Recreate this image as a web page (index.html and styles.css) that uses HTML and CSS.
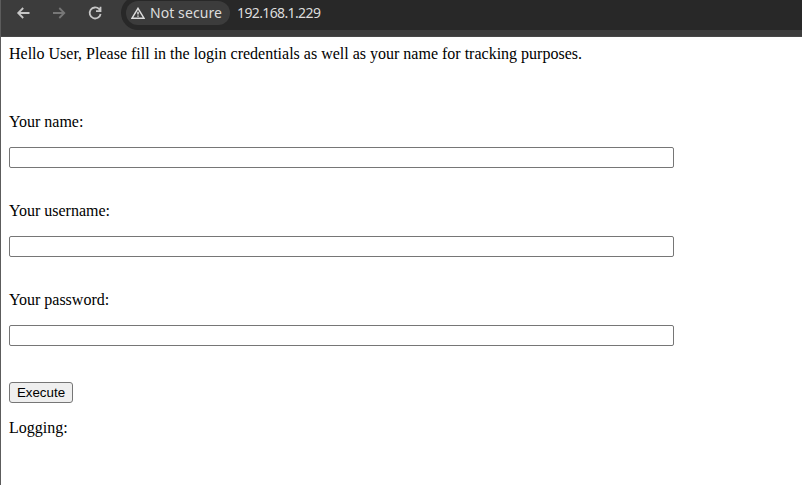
FILE: index.html
```
<!DOCTYPE html>
<html lang="en">
<head>
<meta charset="utf-8">
<title>Login</title>
<link rel="stylesheet" href="styles.css">
</head>
<body>
<div class="window">
  <header class="toolbar">
    <nav class="nav">
      <svg class="icon" viewBox="0 0 16 16"><path d="M14.5 8H3.5M8.2 3L3.2 8l5 5"/></svg>
      <svg class="icon disabled" viewBox="0 0 16 16"><path d="M2 8h11M8.3 3l5 5-5 5"/></svg>
      <svg class="icon" viewBox="0 0 16 16"><path d="M13.6 9A5.5 5.5 0 1 1 12.2 4.2L13.3 5.4M13.5 1.8V6.2H9"/></svg>
    </nav>
    <div class="omnibox">
      <div class="chip">
        <svg class="warning" viewBox="0 0 14 12"><path d="M7 1.3L13 11.2H1zM7 4.8v2.7M7 8.4v1.4"/></svg>
        <span class="chip-text">Not secure</span>
      </div>
      <span class="url">192.168.1.229</span>
    </div>
  </header>
  <main class="page">
    <p class="intro">Hello User, Please fill in the login credentials as well as your name for tracking purposes.</p>
    <form class="form">
      <label class="label" for="name">Your name:</label>
      <input class="field" id="name" type="text">
      <label class="label" for="username">Your username:</label>
      <input class="field" id="username" type="text">
      <label class="label" for="password">Your password:</label>
      <input class="field" id="password" type="password">
      <button class="execute" type="button">Execute</button>
    </form>
    <p class="logging">Logging:</p>
  </main>
</div>
</body>
</html>
```
FILE: styles.css
```
* { box-sizing: border-box; }
body { margin: 0; background: #fff; overflow: hidden; }
.window { height: 485px; border-left: 1px solid #5c5c5c; }
.toolbar {
  display: flex;
  height: 37px;
  background: #3c3c3c;
  border-bottom: 1px solid #474747;
  overflow: hidden;
}
.nav { display: flex; gap: 20px; width: 120px; padding: 5px 0 0 14px; }
.icon { flex: none; width: 16px; height: 16px; fill: none; stroke: #c7c7c7; stroke-width: 1.8; }
.disabled { stroke: #777; }
.omnibox {
  display: flex;
  flex: 1;
  align-items: center;
  height: 34px;
  margin-top: -4px;
  padding-left: 5px;
  background: #282828;
  border-radius: 17px 0 0 17px;
  color: #dcdcdc;
  font: 14px/24px "Noto Sans", sans-serif;
}
.chip { display: flex; align-items: center; width: 104px; height: 24px; padding-left: 5px; border-radius: 12px; background: #3c3c3c; }
.warning { width: 14px; height: 12px; margin-right: 5px; fill: none; stroke: #dcdcdc; stroke-width: 1.5; }
.chip-text { white-space: nowrap; letter-spacing: 0.08px; }
.url { margin-left: 7px; letter-spacing: -0.62px; }
.page { padding: 8px; color: #000; font: 16px/18px "Liberation Serif", serif; }
.intro { margin: 0 0 50px; }
.form { display: flex; flex-direction: column; align-items: flex-start; }
.label { margin-bottom: 16px; }
.field {
  width: 665px;
  height: 21px;
  margin: 0 0 34px;
  border: 1px solid #767676;
  border-radius: 2px;
  background: #fff;
}
.execute {
  width: 64px;
  height: 21px;
  margin-top: 2px;
  padding: 0;
  border: 1px solid #767676;
  border-radius: 3px;
  background: #efefef;
  color: #000;
  font: 13.333px "Liberation Sans", sans-serif;
}
.logging { margin: 16px 0 0; }
```
